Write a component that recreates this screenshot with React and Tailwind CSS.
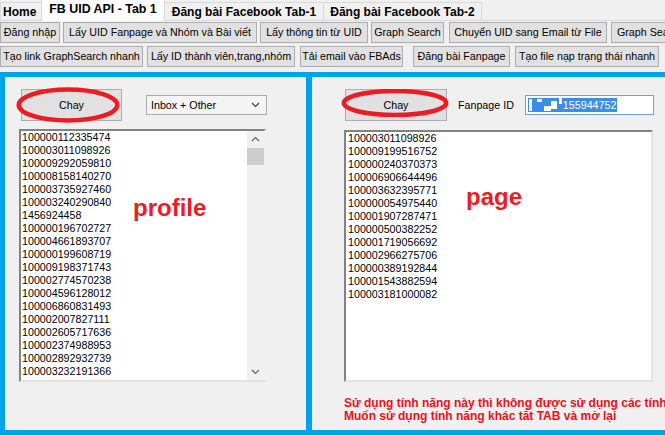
import React from "react";

const leftIds = [
  "100000112335474","100003011098926","100009292059810","100008158140270","100003735927460",
  "100003240290840","1456924458","100000196702727","100004661893707","100000199608719",
  "100009198371743","100002774570238","100004596128012","100006860831493","100002007827111",
  "100002605717636","100002374988953","100002892932739","100003232191366","100003750714040",
];
const rightIds = [
  "100003011098926","100009199516752","100000240370373","100006906644496","100003632395771",
  "100000054975440","100001907287471","100000500382252","100001719056692","100002966275706",
  "100000389192844","100001543882594","100003181000082",
];

function Btn({ w, ml, children, align = "center" }) {
  return (
    <div
      className={`shrink-0 h-full flex items-center ${align === "left" ? "justify-start pl-[5px]" : "justify-center"} bg-[#e1e1e1] border border-[#adadad] whitespace-nowrap overflow-hidden`}
      style={{ width: w, marginLeft: ml }}
    >
      {children}
    </div>
  );
}

function Ellipse({ className }) {
  return (
    <svg className={className} viewBox="0 0 100 100" preserveAspectRatio="none">
      <ellipse cx="50" cy="50" rx="46.5" ry="43" fill="none" stroke="#ed1c24" strokeWidth="4.5" vectorEffect="non-scaling-stroke" />
    </svg>
  );
}

export default function App() {
  return (
    <div className="w-[665px] h-[436px] bg-[#f0f0f0] overflow-hidden flex flex-col font-['Liberation_Sans',Arial,sans-serif] text-black text-[10.7px]">
      {/* Tabs */}
      <div className="h-[21px] shrink-0 flex items-end border-b border-[#d9d9d9] text-[12px] font-bold">
        <div className="w-[41px] h-[18px] flex items-center pl-[2px] border-t border-l border-[#d9d9d9] bg-[#f0f0f0]">Home</div>
        <div className="w-[124px] h-[22px] -mb-px flex items-center justify-center pb-[2px] border-t border-l border-r border-[#d9d9d9] bg-[#fcfcfc] text-[12.4px]">FB UID API - Tab 1</div>
        <div className="w-[159px] h-[18px] flex items-center justify-center border-t border-r border-[#d9d9d9] bg-[#f0f0f0]">Đăng bài Facebook Tab-1</div>
        <div className="w-[158px] h-[18px] flex items-center justify-center border-t border-r border-[#d9d9d9] bg-[#f0f0f0]">Đăng bài Facebook Tab-2</div>
      </div>

      {/* Button rows */}
      <div className="flex flex-col gap-[3px] pt-[1px] shrink-0">
        <div className="h-[21px] flex">
          <Btn w={60} ml={0}>Đăng nhập</Btn>
          <Btn w={194} ml={3}>Lấy UID Fanpage và Nhóm và Bài viết</Btn>
          <Btn w={108} ml={3}>Lấy thông tin từ UID</Btn>
          <Btn w={73} ml={3}>Graph Search</Btn>
          <Btn w={158} ml={5}>Chuyển UID sang Email từ File</Btn>
          <Btn w={73} ml={4} align="left">Graph Search</Btn>
        </div>
        <div className="h-[21px] flex">
          <Btn w={143} ml={0}>Tạo link GraphSearch nhanh</Btn>
          <Btn w={148} ml={4}>Lấy ID thành viên,trang,nhóm</Btn>
          <Btn w={103} ml={5}>Tải email vào FBAds</Btn>
          <Btn w={97} ml={10}>Đăng bài Fanpage</Btn>
          <Btn w={144} ml={5}>Tạo file nạp trạng thái nhanh</Btn>
        </div>
      </div>

      {/* Panels */}
      <div className="mt-[5px] flex h-[363px] shrink-0">
        {/* Left panel */}
        <div className="relative shrink-0 w-[306px] h-full border-l-[5px] border-t-[5px] border-b-[5px] border-[#00a2e8]">
          <Ellipse className="absolute left-[10px] top-[10px] w-[106px] h-[36px] z-10 pointer-events-none" />
          <div className="flex items-center pl-[16px] pt-[12px]">
            <div className="w-[101px] h-[32px] flex items-center justify-center bg-[#e1e1e1] border border-[#adadad]">Chay</div>
            <div className="ml-[24px] w-[121px] h-[20px] flex items-center justify-between pl-[4px] pr-[6px] bg-[#f4f4f4] border border-[#acacac]">
              <span>Inbox + Other</span>
              <svg width="9" height="6" viewBox="0 0 9 6"><path d="M1 1l3.5 3.5L8 1" fill="none" stroke="#404040" strokeWidth="1.2" /></svg>
            </div>
          </div>
          <div className="relative ml-[14px] mt-[8px] w-[247px] h-[253px] flex bg-white border-2 border-t-[#828282] border-l-[#828282] border-r-[#f0f0f0] border-b-[#e3e3e3] overflow-hidden">
            <div className="flex-1 pl-[1px] leading-[13px]">
              {leftIds.map((id, i) => (
                <div key={i} className="h-[13px]">{id}</div>
              ))}
            </div>
            <div className="w-[17px] h-full bg-[#f0f0f0] flex flex-col items-center">
              <svg className="mt-[5px]" width="9" height="6" viewBox="0 0 9 6"><path d="M1 5L4.5 1.5 8 5" fill="none" stroke="#606060" strokeWidth="1.2" /></svg>
              <div className="mt-[6px] w-[17px] h-[17px] bg-[#cdcdcd]" />
              <div className="flex-1" />
              <svg className="mb-[5px]" width="9" height="6" viewBox="0 0 9 6"><path d="M1 1l3.5 3.5L8 1" fill="none" stroke="#606060" strokeWidth="1.2" /></svg>
            </div>
            <div className="absolute left-[112px] top-[65px] text-[24px] leading-[24px] font-bold text-[#ed1c24]">profile</div>
          </div>
        </div>

        {/* Divider */}
        <div className="shrink-0 w-[6px] h-full bg-[#00a2e8]" />

        {/* Right panel */}
        <div className="relative flex-1 min-w-0 h-full border-t-[5px] border-b-[5px] border-[#00a2e8]">
          <Ellipse className="absolute left-[28px] top-[12px] w-[110px] h-[28px] z-10 pointer-events-none" />
          <div className="flex items-center pl-[33px] pt-[12px]">
            <div className="shrink-0 w-[102px] h-[32px] flex items-center justify-center bg-[#e1e1e1] border border-[#adadad]">Chay</div>
            <div className="ml-[11px] whitespace-nowrap">Fanpage ID</div>
            <div className="shrink-0 ml-[11px] w-[129px] h-[20px] flex items-center pl-[2px] bg-white border border-[#7a9cd3]">
              <div className="h-[14px] flex items-center bg-[#3a8ee6] text-white">
                <div className="w-[3px] h-[12px] bg-white ml-[1px]" />
                <div className="w-[5px] h-[3px] bg-white ml-[5px] self-start mt-[1px]" />
                <div className="w-[7px] h-[5px] bg-white ml-[2px] self-end mb-[1px]" />
                <div className="w-[6px] h-[8px] bg-white" />
                <div className="w-[3px] h-[6px] bg-white ml-[2px] self-start" />
                <span className="ml-[1px] pr-[1px]">155944752</span>
              </div>
            </div>
          </div>
          <div className="relative ml-[32px] mt-[9px] w-[309px] h-[252px] bg-white border-2 border-t-[#828282] border-l-[#828282] border-r-[#e3e3e3] border-b-[#e3e3e3] overflow-hidden pl-[2px] leading-[13px]">
            {rightIds.map((id, i) => (
              <div key={i} className="h-[13px]">{id}</div>
            ))}
            <div className="absolute left-[120px] top-[53px] text-[24px] leading-[24px] font-bold text-[#ed1c24]">page</div>
          </div>
          <div className="ml-[32px] mt-[15px] text-[12px] leading-[13px] font-bold text-[#e8121c] whitespace-nowrap">
            <div>Sử dụng tính năng này thì không được sử dụng các tính</div>
            <div>Muốn sử dụng tính năng khác tắt TAB và mở lại</div>
          </div>
        </div>
      </div>
    </div>
  );
}
